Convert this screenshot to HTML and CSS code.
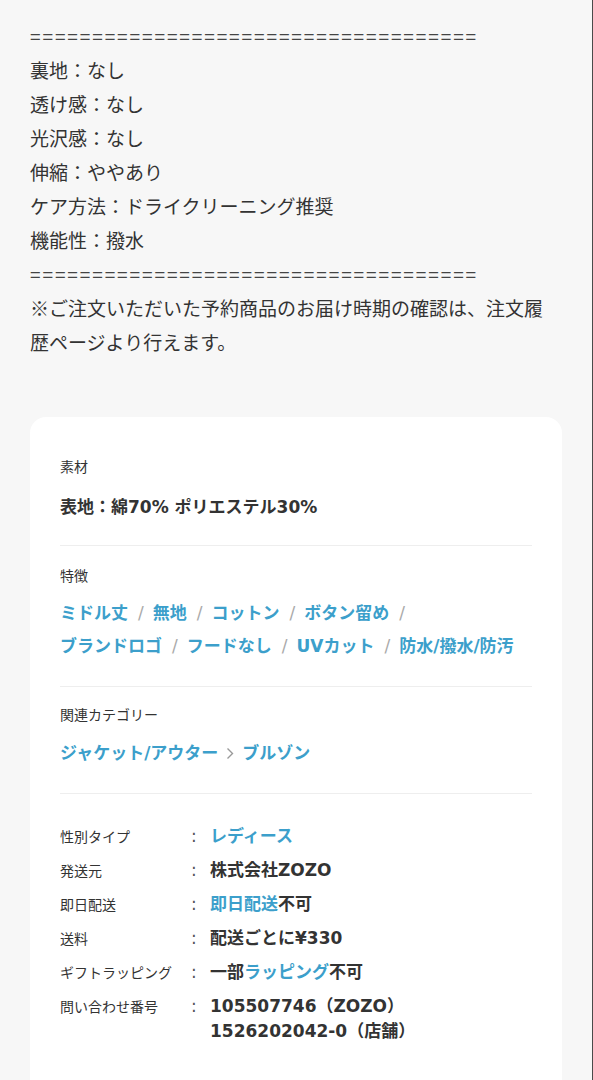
FILE: index.html
```html
<!DOCTYPE html>
<html lang="ja">

<head>
  <meta charset="UTF-8">
  <meta name="viewport" content="width=device-width, initial-scale=1.0">
  <title>商品詳細</title>
  <link rel="stylesheet" href="styles.css">
</head>

<body>
  <div class="page">

    <!-- Description Start -->
    <div class="description">
      <p class="rule">====================================</p>
      <p>裏地：なし</p>
      <p>透け感：なし</p>
      <p>光沢感：なし</p>
      <p>伸縮：ややあり</p>
      <p>ケア方法：ドライクリーニング推奨</p>
      <p>機能性：撥水</p>
      <p class="rule">====================================</p>
      <p>※ご注文いただいた予約商品のお届け時期の確認は、注文履歴ページより行えます。</p>
    </div>
    <!-- Description End -->

    <!-- Spec Card Start -->
    <div class="card">
      <section class="block block-material">
        <h3 class="block-title">素材</h3>
        <p class="block-value">表地：綿70% ポリエステル30%</p>
      </section>

      <section class="block block-tags">
        <h3 class="block-title">特徴</h3>
        <ul class="tags">
          <li><a href="#">ミドル丈</a><span class="sep">/</span></li>
          <li><a href="#">無地</a><span class="sep">/</span></li>
          <li><a href="#">コットン</a><span class="sep">/</span></li>
          <li><a href="#">ボタン留め</a><span class="sep">/</span></li>
          <li><a href="#">ブランドロゴ</a><span class="sep">/</span></li>
          <li><a href="#">フードなし</a><span class="sep">/</span></li>
          <li><a href="#">UVカット</a><span class="sep">/</span></li>
          <li><a href="#">防水/撥水/防汚</a></li>
        </ul>
      </section>

      <section class="block block-cat">
        <h3 class="block-title">関連カテゴリー</h3>
        <p class="block-value crumbs">
          <a href="#">ジャケット/アウター</a>
          <svg class="chevron" width="8" height="13" viewBox="0 0 8 13"><path d="M1.5 1.5 L6.5 6.5 L1.5 11.5" fill="none" stroke="#999" stroke-width="1.4"/></svg>
          <a href="#">ブルゾン</a>
        </p>
      </section>

      <section class="block block-info">
        <dl class="info">
          <dt>性別タイプ</dt><dd class="colon">:</dd><dd><a href="#">レディース</a></dd>
          <dt>発送元</dt><dd class="colon">:</dd><dd>株式会社ZOZO</dd>
          <dt>即日配送</dt><dd class="colon">:</dd><dd><a href="#">即日配送</a>不可</dd>
          <dt>送料</dt><dd class="colon">:</dd><dd>配送ごとに¥330</dd>
          <dt>ギフトラッピング</dt><dd class="colon">:</dd><dd>一部<a href="#">ラッピング</a>不可</dd>
          <dt>問い合わせ番号</dt><dd class="colon">:</dd><dd>105507746（ZOZO）<br>1526202042-0（店舗）</dd>
        </dl>
      </section>
    </div>
    <!-- Spec Card End -->

  </div>
</body>

</html>
```

FILE: styles.css
```css
body {
  font-family: "Noto Sans CJK JP", "Noto Sans", sans-serif;
  background-color: #f7f7f7;
  color: #333;
  margin: 0;
  padding: 0;
}

.page {
  min-height: 1080px;
  border-right: 1px solid #4a4a4a;
  box-sizing: border-box;
}

p, h3, ul, dl, dd {
  margin: 0;
  padding: 0;
}

a {
  color: #3c9fcb;
  text-decoration: none;
}

/* Description */
.description {
  padding: 19px 40px 58px 30px;
  font-size: 19px;
  line-height: 34px;
}

.description .rule {
  letter-spacing: 1.9px;
  color: #444;
}

/* Card */
.card {
  font-family: "DejaVu Sans", "Noto Sans CJK JP", sans-serif;
  background-color: #fff;
  border-radius: 16px;
  margin: 0 30px;
  padding: 20px 30px 40px;
}

.block {
  padding: 19px 0 27px;
  border-bottom: 1px solid #eee;
}

.block-title {
  font-family: "Noto Sans CJK JP", sans-serif;
  font-size: 14px;
  font-weight: 400;
  line-height: 20px;
  color: #333;
}

.block-value {
  margin-top: 16px;
  font-size: 17px;
  font-weight: 700;
  line-height: 26px;
}

.block-material {
  padding-bottom: 25px;
}

.block-material .block-value {
  margin-top: 18px;
}

/* Tags */
.block-tags {
  padding-bottom: 23px;
}

.tags {
  list-style: none;
  margin-top: 12px;
  display: flex;
  flex-wrap: wrap;
  font-size: 17px;
  font-weight: 700;
  line-height: 33px;
}

.tags .sep {
  color: #aaa;
  font-weight: 400;
  margin: 0 9px 0 10px;
}

/* Category */
.block-cat {
  padding-top: 17px;
}

.crumbs {
  display: flex;
  align-items: center;
  gap: 8px;
}

/* Info table */
.block-info {
  padding-top: 30px;
  border-bottom: none;
}

.info {
  display: grid;
  grid-template-columns: 126px 24px 1fr;
  row-gap: 9px;
  line-height: 25px;
}

.info dt {
  font-family: "Noto Sans CJK JP", sans-serif;
  font-size: 14px;
  color: #333;
}

.info dd {
  font-size: 17px;
  font-weight: 700;
}

.info .colon {
  padding-left: 5px;
  font-weight: 400;
  color: #555;
}
```
